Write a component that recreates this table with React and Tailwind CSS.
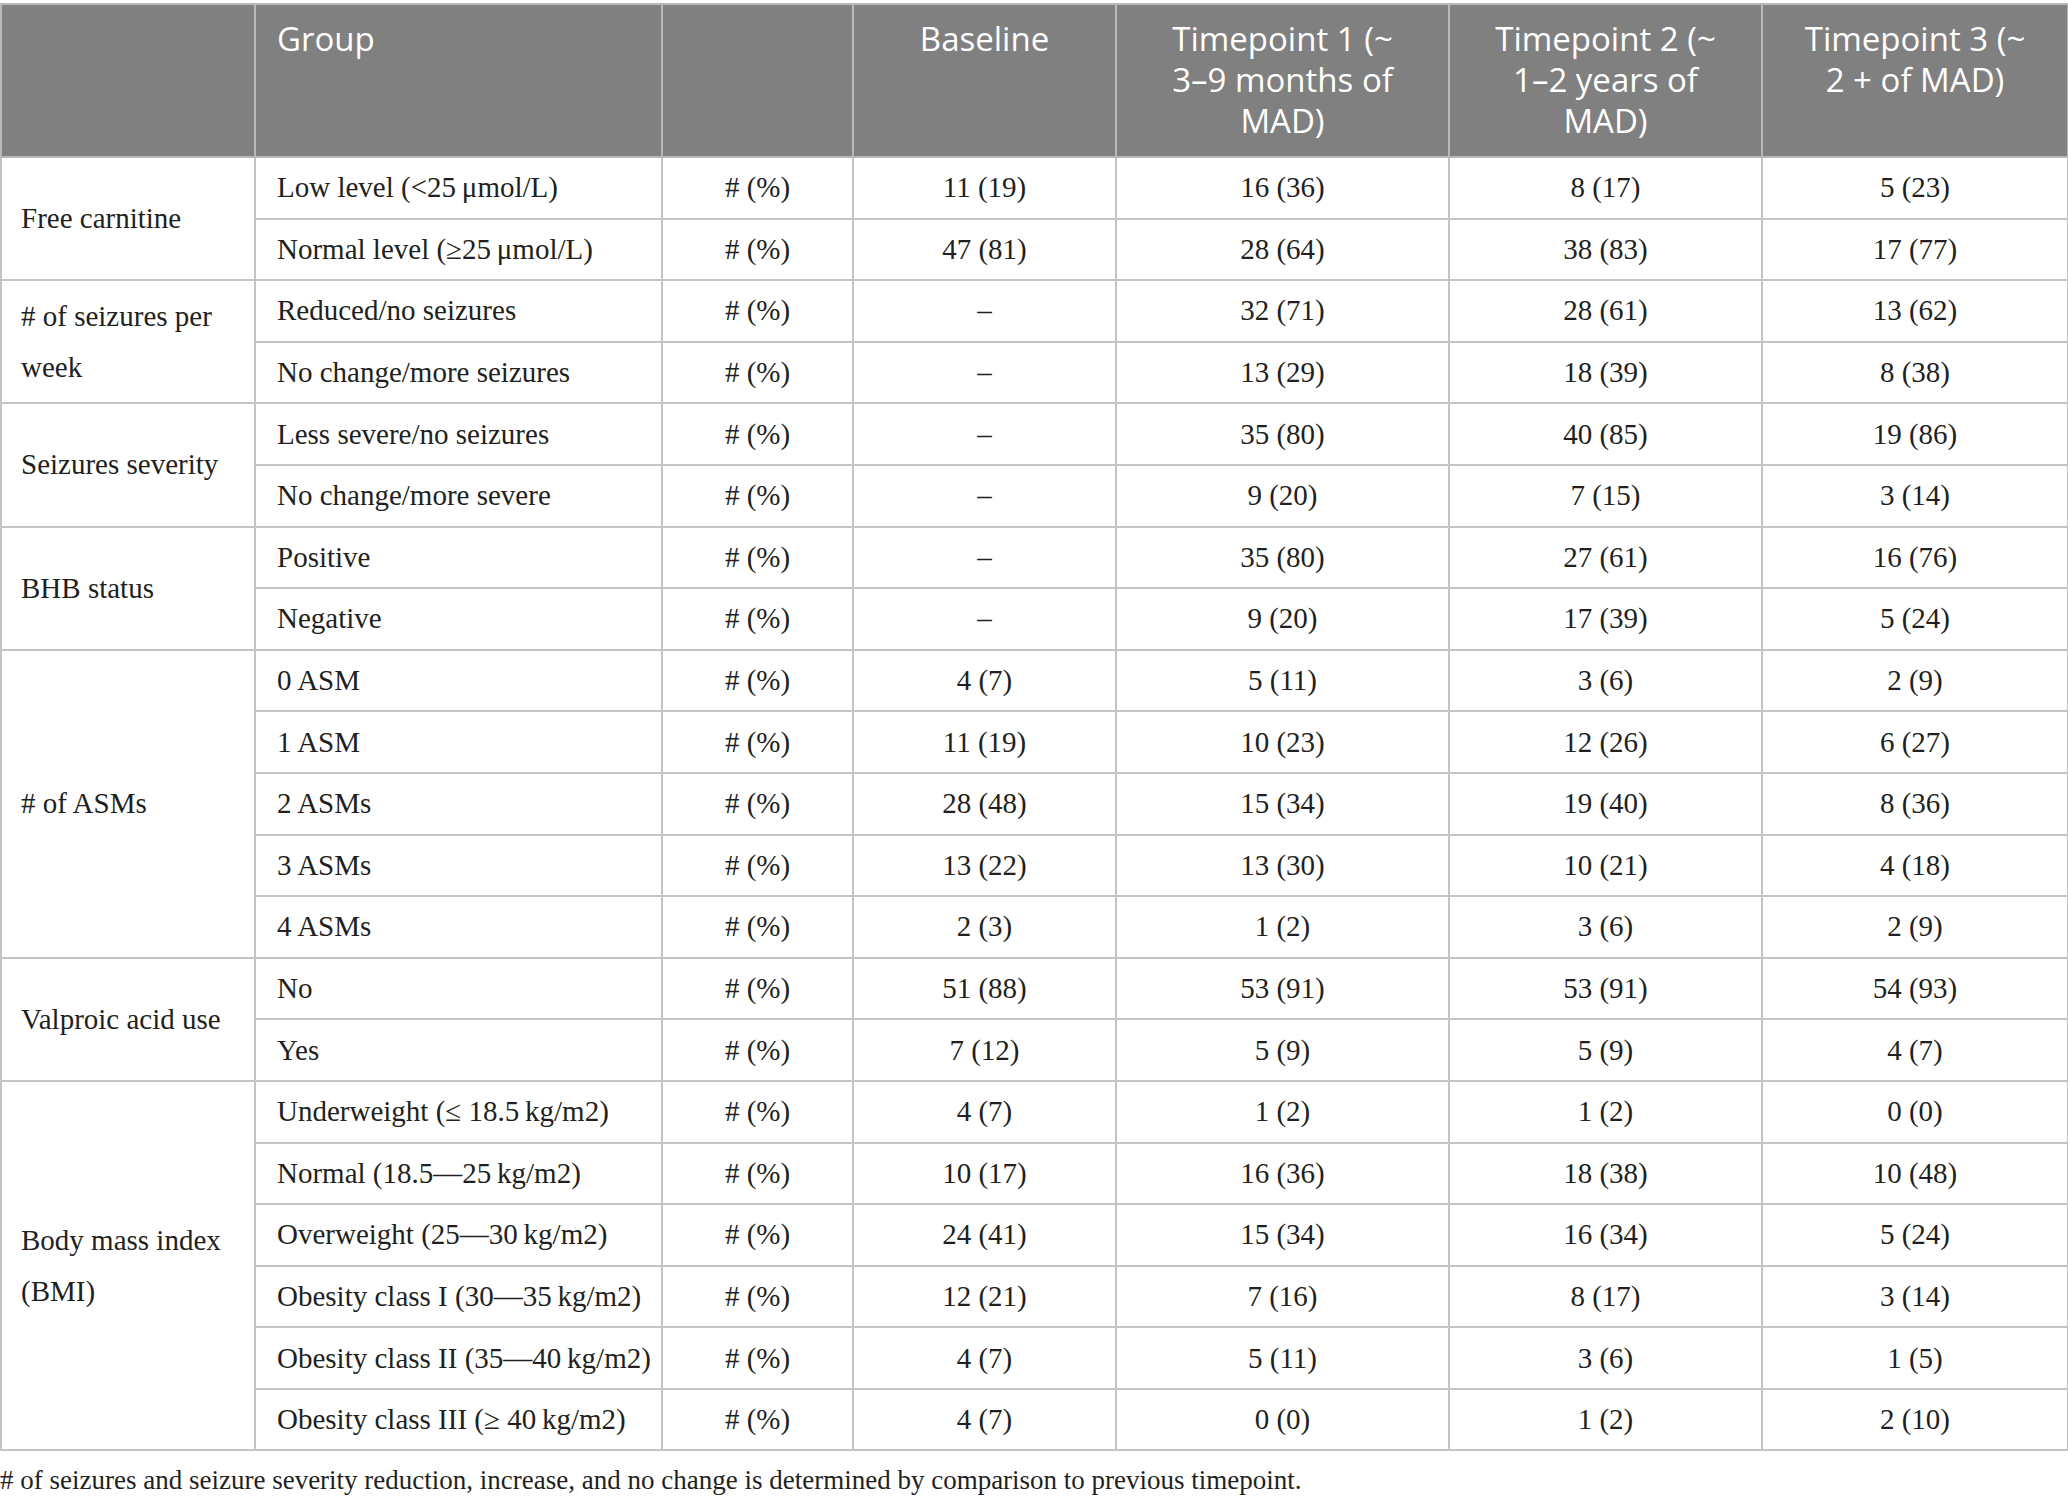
import React from 'react';

const groups = [
  {
    label: 'Free carnitine',
    rows: [
      ['Low level (<25\u2009μmol/L)', '11 (19)', '16 (36)', '8 (17)', '5 (23)'],
      ['Normal level (≥25\u2009μmol/L)', '47 (81)', '28 (64)', '38 (83)', '17 (77)'],
    ],
  },
  {
    label: '# of seizures per week',
    rows: [
      ['Reduced/no seizures', '–', '32 (71)', '28 (61)', '13 (62)'],
      ['No change/more seizures', '–', '13 (29)', '18 (39)', '8 (38)'],
    ],
  },
  {
    label: 'Seizures severity',
    rows: [
      ['Less severe/no seizures', '–', '35 (80)', '40 (85)', '19 (86)'],
      ['No change/more severe', '–', '9 (20)', '7 (15)', '3 (14)'],
    ],
  },
  {
    label: 'BHB status',
    rows: [
      ['Positive', '–', '35 (80)', '27 (61)', '16 (76)'],
      ['Negative', '–', '9 (20)', '17 (39)', '5 (24)'],
    ],
  },
  {
    label: '# of ASMs',
    rows: [
      ['0 ASM', '4 (7)', '5 (11)', '3 (6)', '2 (9)'],
      ['1 ASM', '11 (19)', '10 (23)', '12 (26)', '6 (27)'],
      ['2 ASMs', '28 (48)', '15 (34)', '19 (40)', '8 (36)'],
      ['3 ASMs', '13 (22)', '13 (30)', '10 (21)', '4 (18)'],
      ['4 ASMs', '2 (3)', '1 (2)', '3 (6)', '2 (9)'],
    ],
  },
  {
    label: 'Valproic acid use',
    rows: [
      ['No', '51 (88)', '53 (91)', '53 (91)', '54 (93)'],
      ['Yes', '7 (12)', '5 (9)', '5 (9)', '4 (7)'],
    ],
  },
  {
    label: 'Body mass index (BMI)',
    rows: [
      ['Underweight (≤ 18.5\u2009kg/m2)', '4 (7)', '1 (2)', '1 (2)', '0 (0)'],
      ['Normal (18.5—25\u2009kg/m2)', '10 (17)', '16 (36)', '18 (38)', '10 (48)'],
      ['Overweight (25—30\u2009kg/m2)', '24 (41)', '15 (34)', '16 (34)', '5 (24)'],
      ['Obesity class I (30—35\u2009kg/m2)', '12 (21)', '7 (16)', '8 (17)', '3 (14)'],
      ['Obesity class II (35—40\u2009kg/m2)', '4 (7)', '5 (11)', '3 (6)', '1 (5)'],
      ['Obesity class III (≥ 40\u2009kg/m2)', '4 (7)', '0 (0)', '1 (2)', '2 (10)'],
    ],
  },
];

const headCell = 'border-2 border-[#b9b9b9] align-top px-[21px] pt-[13px] font-normal';
const bodyCell = 'border-2 border-[#c4c4c4] align-middle px-[21px]';

export default function App() {
  return (
    <div className="min-h-screen bg-white pt-[3px] font-['Liberation_Serif',serif] text-[#231f20]">
      <table className="w-[2067px] table-fixed border-collapse">
        <colgroup>
          <col className="w-[254px]" />
          <col className="w-[407px]" />
          <col className="w-[191px]" />
          <col className="w-[263px]" />
          <col className="w-[333px]" />
          <col className="w-[313px]" />
          <col className="w-[306px]" />
        </colgroup>
        <thead>
          <tr className="h-[153px] bg-[#7f807f] text-white font-['Open_Sans',sans-serif] text-[33px] leading-[41px]">
            <th className={headCell}></th>
            <th className={`${headCell} text-left`}>Group</th>
            <th className={headCell}></th>
            <th className={`${headCell} text-center`}>Baseline</th>
            <th className={`${headCell} text-center`}>
              Timepoint 1 (~
              <br />
              3–9 months of
              <br />
              MAD)
            </th>
            <th className={`${headCell} text-center`}>
              Timepoint 2 (~
              <br />
              1–2 years of
              <br />
              MAD)
            </th>
            <th className={`${headCell} text-center`}>
              Timepoint 3 (~
              <br />
              2 + of MAD)
            </th>
          </tr>
        </thead>
        <tbody className="text-[29px] leading-[51px]">
          {groups.map((group) =>
            group.rows.map((row, i) => (
              <tr key={group.label + row[0]} className="h-[61.6px]">
                {i === 0 && (
                  <td rowSpan={group.rows.length} className={`${bodyCell} pl-[19px] text-left`}>
                    {group.label}
                  </td>
                )}
                <td className={`${bodyCell} text-left whitespace-nowrap`}>{row[0]}</td>
                <td className={`${bodyCell} text-center`}># (%)</td>
                {row.slice(1).map((val, j) => (
                  <td key={j} className={`${bodyCell} text-center`}>
                    {val}
                  </td>
                ))}
              </tr>
            ))
          )}
        </tbody>
      </table>
      <p className="mt-[12px] text-[27px] leading-[34px]">
        # of seizures and seizure severity reduction, increase, and no change is determined by comparison to previous timepoint.
      </p>
    </div>
  );
}
